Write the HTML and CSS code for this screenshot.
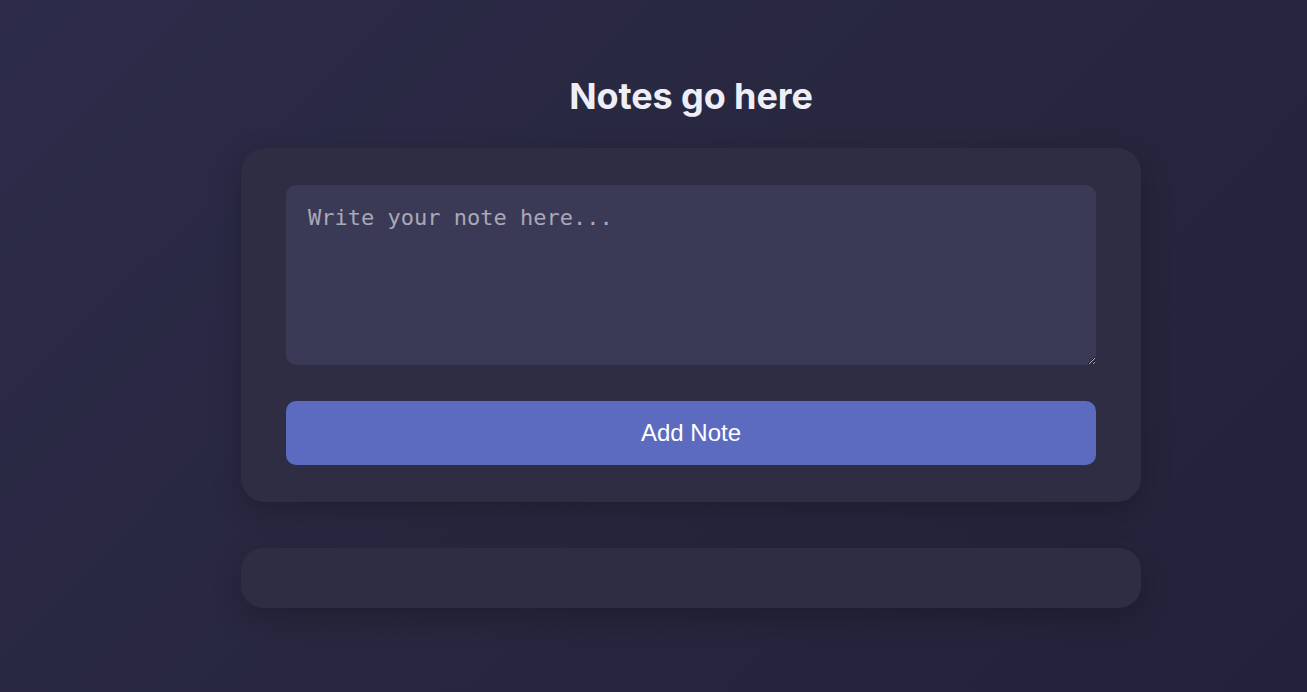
FILE: index.html
```html
<!DOCTYPE html>
<html lang="en">
<head>
<meta charset="utf-8">
<title>Notes</title>
<link rel="stylesheet" href="styles.css">
</head>
<body>
<main class="app">
  <h1 class="title">Notes go here</h1>
  <section class="card editor">
    <textarea class="note-input" placeholder="Write your note here..."></textarea>
    <button class="add-btn" type="button">Add Note</button>
  </section>
  <section class="card notes-list"></section>
</main>
</body>
</html>
```
FILE: styles.css
```css
html, body {
  margin: 0;
  padding: 0;
  height: 100%;
}
body {
  background: linear-gradient(135deg, #2d2b4a 0%, #28273f 50%, #23223a 100%);
  font-family: Inter, "Liberation Sans", sans-serif;
  overflow: hidden;
}
.app {
  width: 900px;
  margin-left: 241px;
  padding-top: 74px;
  display: flex;
  flex-direction: column;
}
.title {
  margin: 0 0 30px;
  text-align: center;
  color: #eeeef6;
  font-size: 36px;
  font-weight: 700;
  letter-spacing: -0.1px;
  line-height: 44px;
}
.card {
  background: #2e2d43;
  border-radius: 24px;
  box-shadow: 0 10px 30px rgba(0, 0, 0, 0.22);
}
.editor {
  padding: 37px 45px;
  display: flex;
  flex-direction: column;
  gap: 36px;
}
.note-input {
  box-sizing: border-box;
  height: 180px;
  width: 100%;
  background: #3b3a56;
  border: none;
  border-radius: 10px;
  padding: 20px 22px;
  color: #e8e8f0;
  font-family: "DejaVu Sans Mono", "Liberation Mono", monospace;
  font-size: 22px;
  outline: none;
}
.note-input::placeholder {
  color: #a9a8b6;
}
.add-btn {
  height: 64px;
  border: none;
  border-radius: 10px;
  background: #5c6bc0;
  color: #ffffff;
  font-family: "Liberation Sans", Arial, sans-serif;
  font-size: 24px;
  cursor: pointer;
}
.notes-list {
  margin-top: 46px;
  height: 60px;
  border-radius: 22px;
}
```
